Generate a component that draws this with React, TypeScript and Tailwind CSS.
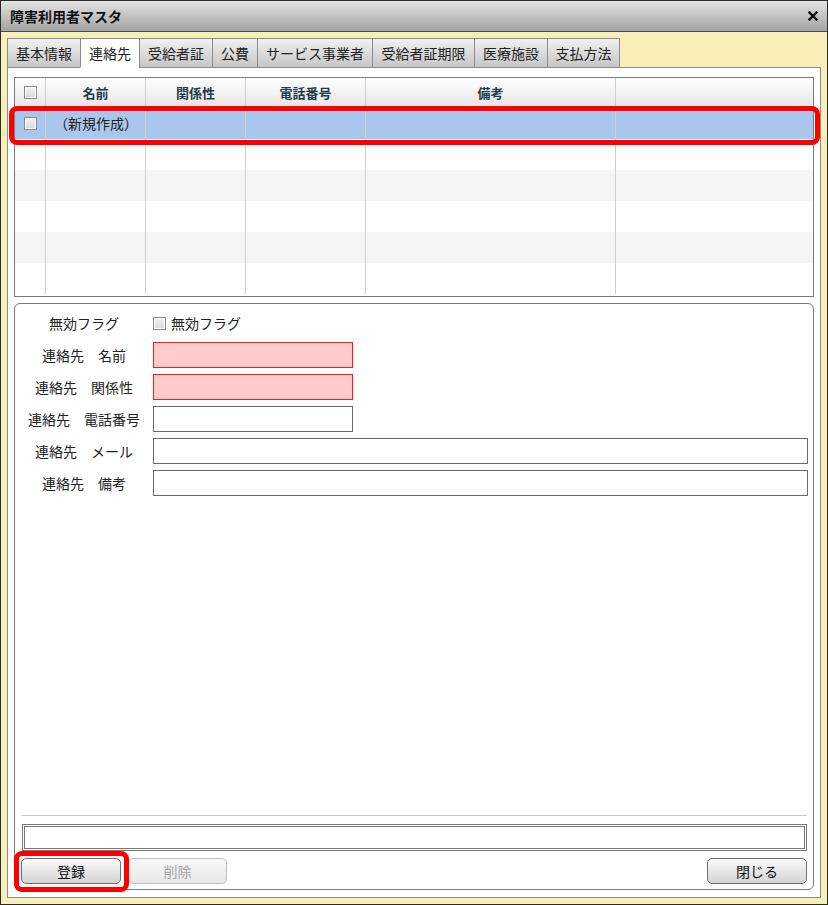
import React from "react";

const font = { fontFamily: '"Noto Sans CJK JP", "Noto Sans", sans-serif' };

function CheckBox() {
  return (
    <div className="w-[13px] h-[13px] border border-[#8a8a8a] bg-gradient-to-b from-[#f4f4f4] to-[#d9d9d9] shadow-[inset_0_0_0_1px_#ffffff]" />
  );
}

const tabs = [
  { label: "基本情報", w: "w-[74px]" },
  { label: "連絡先", w: "w-[60px]", active: true },
  { label: "受給者証", w: "w-[74px]" },
  { label: "公費", w: "w-[46px]" },
  { label: "サービス事業者", w: "w-[116px]" },
  { label: "受給者証期限", w: "w-[103px]" },
  { label: "医療施設", w: "w-[74px]" },
  { label: "支払方法", w: "w-[73px]" },
];

const cols = [
  { label: "", w: "w-[31px]", check: true },
  { label: "名前", w: "w-[100px]" },
  { label: "関係性", w: "w-[100px]" },
  { label: "電話番号", w: "w-[120px]" },
  { label: "備考", w: "w-[250px]" },
  { label: "", w: "flex-1" },
];

function Row({ bg, selected }: { bg: string; selected?: boolean }) {
  return (
    <div className={`flex h-[31px] ${bg}`}>
      {cols.map((c, i) => (
        <div
          key={i}
          className={`${c.w} h-full ${i < cols.length - 1 ? "border-r border-[#cfcfcf]" : ""} flex items-center ${c.check ? "justify-center" : ""}`}
        >
          {c.check && selected && <CheckBox />}
          {i === 1 && selected && (
            <span className="text-[14px] text-[#222] pl-[8px]">（新規作成）</span>
          )}
        </div>
      ))}
    </div>
  );
}

function FormRow({ label, children }: { label: string; children: React.ReactNode }) {
  return (
    <div className="flex items-center h-[26px]">
      <div className="w-[138px] text-center text-[14px] text-[#222] whitespace-pre">{label}</div>
      <div className="flex-1 flex items-center pr-[5px]">{children}</div>
    </div>
  );
}

function Btn({ label, disabled }: { label: string; disabled?: boolean }) {
  return (
    <div
      className={`h-[26px] flex items-center justify-center rounded-[5px] border text-[14px] ${
        disabled
          ? "border-[#bdbdbd] text-[#a8a8a8] bg-gradient-to-b from-[#fafafa] to-[#e6e6e6]"
          : "border-[#6e6e6e] text-[#111] bg-gradient-to-b from-[#fbfbfb] to-[#d4d4d4]"
      } ${label === "削除" ? "w-[99px]" : "w-[100px]"}`}
    >
      {label}
    </div>
  );
}

export default function App() {
  return (
    <div
      style={font}
      className="relative w-[828px] h-[905px] border border-[#2a2a2a] bg-[#f8eeb8] flex flex-col"
    >
      {/* title bar */}
      <div className="h-[31px] shrink-0 border-b border-[#4a4a4a] bg-gradient-to-b from-[#e4e4e4] to-[#a3a3a3] flex items-center justify-between pl-[9px] pr-[9px]">
        <span className="text-[14px] font-bold text-[#111]">障害利用者マスタ</span>
        <svg width="10" height="10" viewBox="0 0 10 10">
          <path d="M1.5 1.5 L8.5 8.5 M8.5 1.5 L1.5 8.5" stroke="#111" strokeWidth="2.4" strokeLinecap="square" />
        </svg>
      </div>

      {/* body */}
      <div className="flex-1 flex flex-col px-[6px] pt-[6px] pb-[6px]">
        {/* tabs */}
        <div className="flex h-[30px] shrink-0 relative z-10">
          {tabs.map((t) => (
            <div
              key={t.label}
              className={`${t.w} shrink-0 h-full flex items-center justify-center text-[14px] text-[#222] border border-[#8c8c8c] -ml-px first:ml-0 ${
                t.active
                  ? "bg-white border-b-white"
                  : "bg-gradient-to-b from-[#f1f1f1] to-[#c6c6c6] border-b-[#8c8c8c]"
              }`}
            >
              {t.label}
            </div>
          ))}
        </div>

        {/* panel */}
        <div className="flex-1 -mt-px border border-[#8c8c8c] bg-white flex flex-col px-[6px] pt-[9px] pb-[7px]">
          {/* grid */}
          <div className="h-[220px] shrink-0 border border-[#7a7a7a] flex flex-col overflow-hidden">
            <div className="flex h-[30px] shrink-0 bg-gradient-to-b from-[#ffffff] to-[#e6e6e6] border-b border-[#d0d0d0]">
              {cols.map((c, i) => (
                <div
                  key={i}
                  className={`${c.w} h-full flex items-center justify-center text-[13px] font-bold text-[#1e3c4a] ${
                    i < cols.length - 1 ? "border-r border-[#cfcfcf]" : ""
                  }`}
                >
                  {c.check ? <CheckBox /> : c.label}
                </div>
              ))}
            </div>
            <Row bg="bg-[#a9c6ec]" selected />
            <Row bg="bg-white" />
            <Row bg="bg-[#f5f5f5]" />
            <Row bg="bg-white" />
            <Row bg="bg-[#f5f5f5]" />
            <Row bg="bg-white" />
          </div>

          {/* form panel */}
          <div className="flex-1 mt-[6px] border border-[#7a7a7a] rounded-[6px] flex flex-col pt-[6px] pb-[5px]">
            <div className="flex flex-col gap-[6px]">
              <FormRow label="無効フラグ">
                <div className="flex items-center gap-[5px]">
                  <CheckBox />
                  <span className="text-[14px] text-[#222]">無効フラグ</span>
                </div>
              </FormRow>
              <FormRow label="連絡先　名前">
                <div className="w-[200px] h-[26px] border border-[#ff1a1a] bg-[#ffcccc]" />
              </FormRow>
              <FormRow label="連絡先　関係性">
                <div className="w-[200px] h-[26px] border border-[#ff1a1a] bg-[#ffcccc]" />
              </FormRow>
              <FormRow label="連絡先　電話番号">
                <div className="w-[200px] h-[26px] border border-[#6a6a6a] bg-white" />
              </FormRow>
              <FormRow label="連絡先　メール">
                <div className="flex-1 h-[26px] border border-[#6a6a6a] bg-white" />
              </FormRow>
              <FormRow label="連絡先　備考">
                <div className="flex-1 h-[26px] border border-[#6a6a6a] bg-white" />
              </FormRow>
            </div>

            <div className="flex-1" />

            <div className="px-[6px] flex flex-col">
              <div className="h-px bg-[#cccccc]" />
              <div className="mt-[8px] ml-px h-[27px] border border-[#777] p-px">
                <div className="w-full h-full border border-[#777]" />
              </div>
              <div className="mt-[7px] flex items-center gap-[7px]">
                <Btn label="登録" />
                <Btn label="削除" disabled />
                <div className="flex-1" />
                <Btn label="閉じる" />
              </div>
            </div>
          </div>
        </div>
      </div>

      {/* red highlight overlays */}
      <div className="absolute left-[8px] top-[105px] w-[811px] h-[39px] border-[5px] border-[#ff0000] rounded-[8px]" />
      <div className="absolute left-[13px] top-[850px] w-[115px] h-[41px] border-[5px] border-[#ff0000] rounded-[8px]" />
    </div>
  );
}
